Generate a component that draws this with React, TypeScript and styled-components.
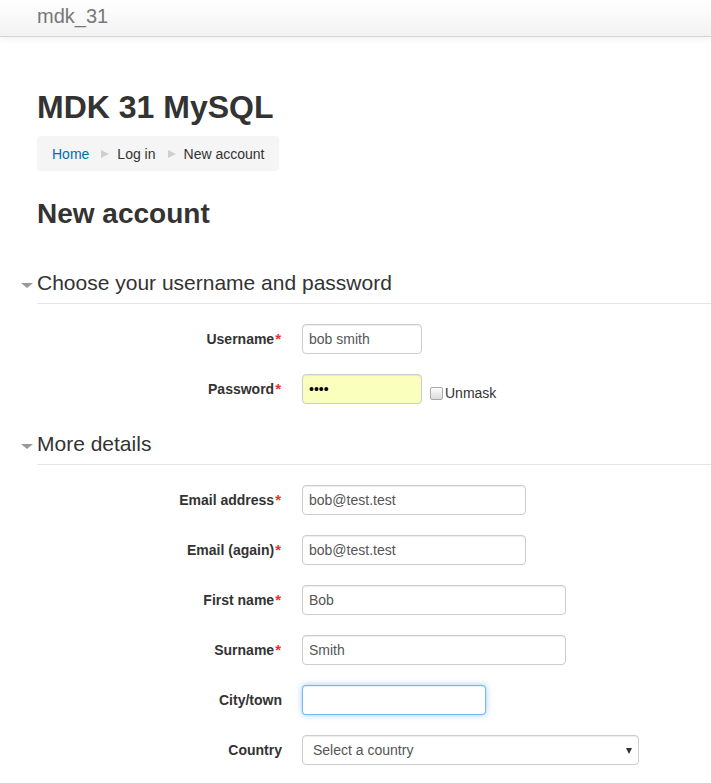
import React from "react";
import styled, { createGlobalStyle, css } from "styled-components";

const GlobalStyle = createGlobalStyle`
  html, body {
    margin: 0;
    padding: 0;
    background: #fff;
  }
  body {
    font-family: "Liberation Sans", Arial, sans-serif;
    font-size: 14px;
    line-height: 20px;
    color: #333;
  }
  * { box-sizing: border-box; }
`;

const Navbar = styled.header`
  height: 37px;
  padding: 6px 37px 0;
  background: linear-gradient(to bottom, #ffffff, #f2f2f2);
  border-bottom: 1px solid #d4d4d4;
  box-shadow: 0 1px 8px rgba(0, 0, 0, 0.08);
`;

const Brand = styled.a`
  font-size: 20px;
  line-height: 20px;
  color: #777;
  text-decoration: none;
`;

const Main = styled.main`
  padding-left: 37px;
`;

const SiteTitle = styled.h1`
  margin: 50px 0 0;
  font-size: 32px;
  line-height: 40px;
  font-weight: bold;
  color: #333;
`;

const Breadcrumb = styled.nav`
  display: inline-flex;
  align-items: center;
  margin-top: 9px;
  height: 35px;
  padding: 0 15px;
  background: #f5f5f5;
  border-radius: 4px;
`;

const Crumb = styled.span<{ $link?: boolean }>`
  color: ${(p) => (p.$link ? "#0070a8" : "#333")};
`;

const Divider = styled.span`
  display: inline-block;
  width: 0;
  height: 0;
  margin: 1px 8px 0 12px;
  border-left: 8px solid #cfcfcf;
  border-top: 4px solid transparent;
  border-bottom: 4px solid transparent;
`;

const PageHeading = styled.h2`
  margin: 23px 0 0;
  font-size: 28px;
  line-height: 40px;
  font-weight: bold;
  color: #333;
`;

const Fieldset = styled.fieldset<{ $first?: boolean }>`
  margin: ${(p) => (p.$first ? "29px" : "0")} 0 0;
  padding: 0;
  border: 0;
  min-width: 0;
`;

const Legend = styled.legend`
  position: relative;
  display: block;
  width: 100%;
  padding: 0;
  margin-bottom: 20px;
  font-size: 21px;
  line-height: 40px;
  color: #333;
  border-bottom: 1px solid #e5e5e5;

  &::before {
    content: "";
    position: absolute;
    left: -16px;
    top: 20px;
    width: 0;
    height: 0;
    border-top: 5px solid #999;
    border-left: 6px solid transparent;
    border-right: 6px solid transparent;
  }
`;

const Row = styled.div`
  display: grid;
  grid-template-columns: 245px 1fr;
  column-gap: 20px;
  margin-bottom: 20px;
`;

const Label = styled.label`
  padding-top: 5px;
  text-align: right;
  font-weight: bold;
  color: #333;
`;

const Req = styled.span`
  display: inline-block;
  margin-left: 1px;
  padding-right: 1px;
  font-size: 15px;
  color: #ee3030;
  font-weight: bold;
`;

const Controls = styled.div`
  display: flex;
  align-items: flex-start;
`;

const fieldBase = css`
  height: 30px;
  padding: 4px 6px;
  font-family: "Liberation Sans", Arial, sans-serif;
  font-size: 14px;
  line-height: 20px;
  color: #555;
  background: #fff;
  border: 1px solid #ccc;
  border-radius: 4px;
  box-shadow: inset 0 1px 1px rgba(0, 0, 0, 0.075);
  outline: none;
`;

const TextInput = styled.input<{ $w: number; $autofill?: boolean; $focus?: boolean }>`
  ${fieldBase}
  width: ${(p) => p.$w}px;
  ${(p) =>
    p.$autofill &&
    css`
      background: #faffbd;
      color: #000;
    `}
  ${(p) =>
    p.$focus &&
    css`
      border-color: rgba(82, 168, 236, 0.8);
      box-shadow: inset 0 1px 1px rgba(0, 0, 0, 0.075),
        0 0 6px rgba(82, 168, 236, 0.6);
    `}
`;

const UnmaskWrap = styled.label`
  display: flex;
  align-items: center;
  margin: 9px 0 0 8px;
  color: #333;
`;

const Checkbox = styled.input`
  appearance: none;
  width: 13px;
  height: 13px;
  margin: 1px 2px 0 0;
  border: 1px solid #a9a9a9;
  border-radius: 2px;
  background: linear-gradient(to bottom, #fcfcfc, #dcdcdc);
`;

const SelectWrap = styled.div`
  position: relative;
  width: 337px;
`;

const Select = styled.select`
  ${fieldBase}
  appearance: none;
  width: 100%;
  padding: 4px 24px 4px 10px;
`;

const SelectArrow = styled.span`
  position: absolute;
  right: 7px;
  top: 13px;
  width: 0;
  height: 0;
  border-top: 6px solid #333;
  border-left: 3.5px solid transparent;
  border-right: 3.5px solid transparent;
  pointer-events: none;
`;

type Field = {
  label: string;
  required?: boolean;
  value: string;
  width: number;
  type?: string;
  autofill?: boolean;
  focus?: boolean;
};

const detailFields: Field[] = [
  { label: "Email address", required: true, value: "bob@test.test", width: 224 },
  { label: "Email (again)", required: true, value: "bob@test.test", width: 224 },
  { label: "First name", required: true, value: "Bob", width: 264 },
  { label: "Surname", required: true, value: "Smith", width: 264 },
  { label: "City/town", value: "", width: 184, focus: true },
];

function FieldRow({ f }: { f: Field }) {
  return (
    <Row>
      <Label>
        {f.label}
        {f.required && <Req>*</Req>}
      </Label>
      <Controls>
        <TextInput
          type={f.type ?? "text"}
          defaultValue={f.value}
          $w={f.width}
          $autofill={f.autofill}
          $focus={f.focus}
        />
      </Controls>
    </Row>
  );
}

export default function App() {
  return (
    <>
      <GlobalStyle />
      <Navbar>
        <Brand href="#">mdk_31</Brand>
      </Navbar>
      <Main>
        <SiteTitle>MDK 31 MySQL</SiteTitle>
        <Breadcrumb>
          <Crumb $link>Home</Crumb>
          <Divider />
          <Crumb>Log in</Crumb>
          <Divider />
          <Crumb>New account</Crumb>
        </Breadcrumb>
        <PageHeading>New account</PageHeading>

        <Fieldset $first>
          <Legend>Choose your username and password</Legend>
          <FieldRow f={{ label: "Username", required: true, value: "bob smith", width: 120 }} />
          <Row>
            <Label>
              Password<Req>*</Req>
            </Label>
            <Controls>
              <TextInput type="password" defaultValue="test" $w={120} $autofill />
              <UnmaskWrap>
                <Checkbox type="checkbox" />
                Unmask
              </UnmaskWrap>
            </Controls>
          </Row>
        </Fieldset>

        <Fieldset>
          <Legend>More details</Legend>
          {detailFields.map((f) => (
            <FieldRow key={f.label} f={f} />
          ))}
          <Row>
            <Label>Country</Label>
            <Controls>
              <SelectWrap>
                <Select defaultValue="">
                  <option value="">Select a country</option>
                </Select>
                <SelectArrow />
              </SelectWrap>
            </Controls>
          </Row>
        </Fieldset>
      </Main>
    </>
  );
}
